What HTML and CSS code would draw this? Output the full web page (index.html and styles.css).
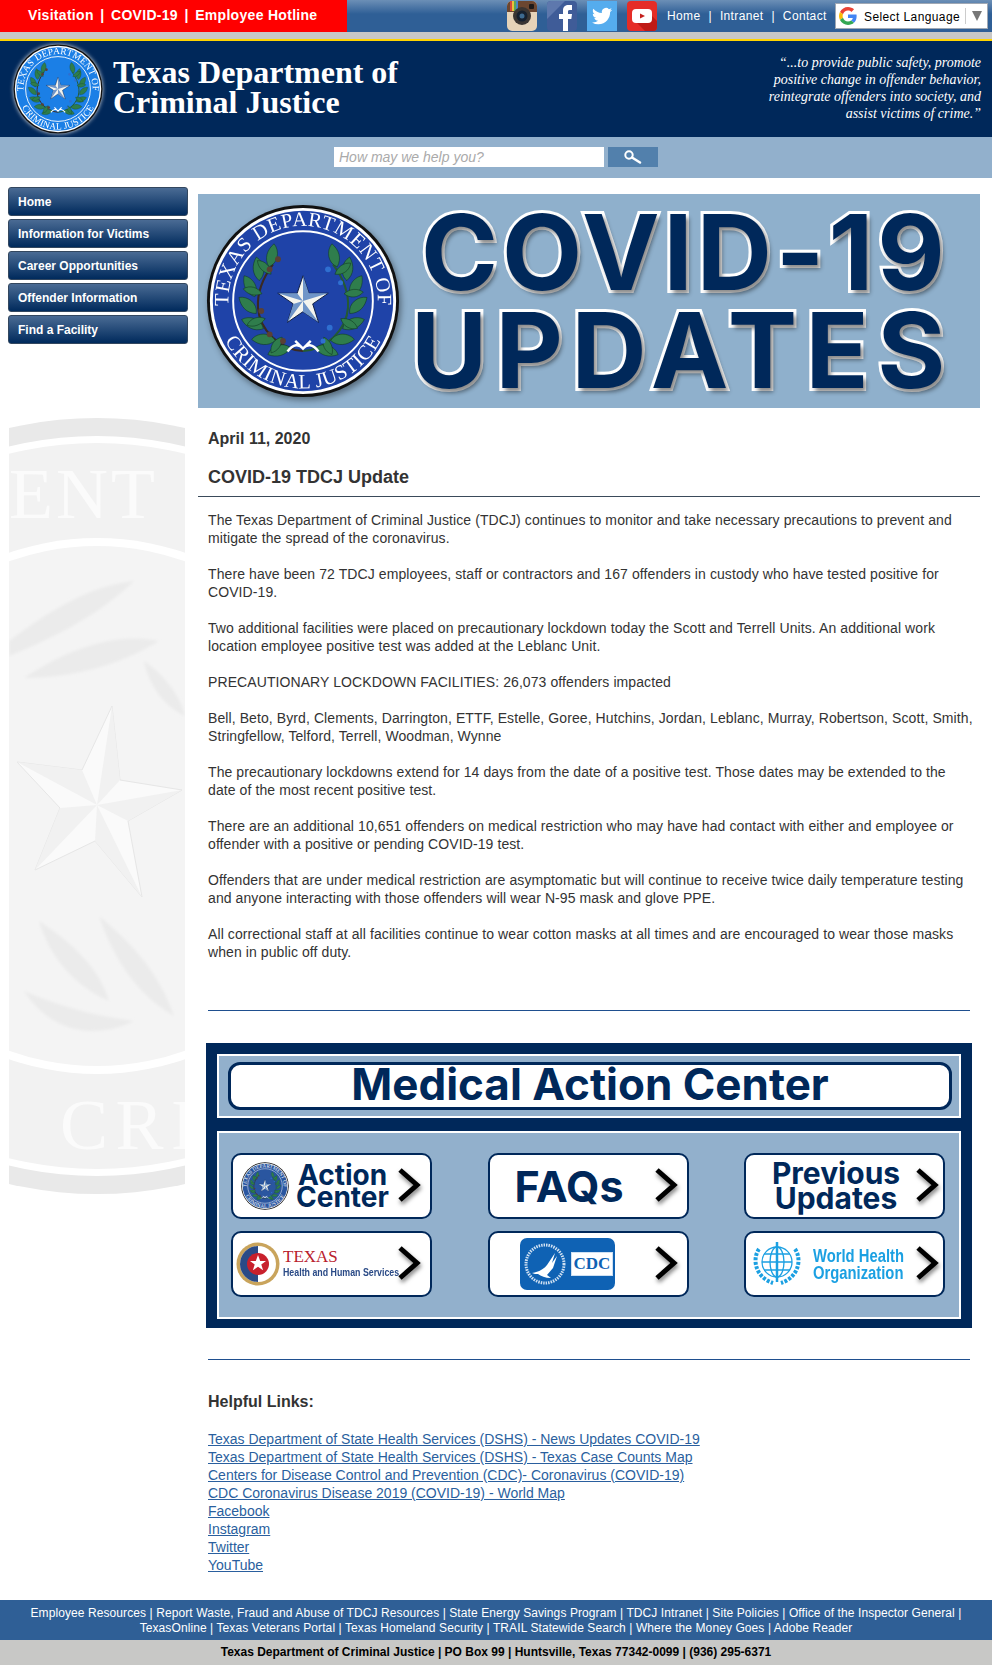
FILE: index.html
```html
<!DOCTYPE html>
<html lang="en">
<head>
    <meta charset="UTF-8">
    <meta name="viewport" content="width=device-width, initial-scale=1.0">
    <title>COVID-19 TDCJ Update</title>
    <link rel="stylesheet" href="styles.css">
</head>
<body>
    <svg class="defs" width="0" height="0" aria-hidden="true">
        <defs>
            <path id="leaf" d="M100 42c3-11 13-16 24-15-1 11-13 20-24 15z"/>
            <path id="leaf-in" d="M100 50c-5-8-4-17 2-23 6 7 5 17-2 23z"/>
            <path id="arc-top" d="M24 112A77 77 0 1 1 176 112"/>
            <path id="arc-bot" d="M10 100A90 90 0 0 0 190 100"/>
            <symbol id="seal" viewBox="0 0 200 200">
                <circle cx="100" cy="100" r="99" fill="#111"/>
                <circle cx="100" cy="100" r="96" fill="#fff"/>
                <circle cx="100" cy="100" r="93" fill="var(--seal)"/>
                <circle cx="100" cy="100" r="72" fill="none" stroke="#fff" stroke-width="2"/>
                <text class="seal-text"><textPath href="#arc-top" startOffset="50%" text-anchor="middle">TEXAS DEPARTMENT OF</textPath></text>
                <text class="seal-text"><textPath href="#arc-bot" startOffset="50%" text-anchor="middle">CRIMINAL JUSTICE</textPath></text>
                <g transform="translate(100 100) scale(.86) translate(-100 -100)">
                    <path d="M100 160C72 158 48 135 46 108 45 90 52 72 64 56" fill="none" stroke="#3a2a22" stroke-width="2.500"/>
                    <path d="M100 160C128 158 152 135 154 108 155 90 148 72 136 56" fill="none" stroke="#245a34" stroke-width="2.500"/>
                    <g fill="#2f7d4c" stroke="#0f3520" stroke-width=".6">
                        <use href="#leaf" transform="rotate(-165 100 100)"/>
                        <use href="#leaf" transform="rotate(-145 100 100)"/>
                        <use href="#leaf" transform="rotate(-125 100 100)"/>
                        <use href="#leaf" transform="rotate(-105 100 100)"/>
                        <use href="#leaf" transform="rotate(-85 100 100)"/>
                        <use href="#leaf" transform="rotate(-65 100 100)"/>
                        <use href="#leaf" transform="rotate(-45 100 100)"/>
                        <use href="#leaf-in" transform="rotate(-150 100 100)"/>
                        <use href="#leaf-in" transform="rotate(-115 100 100)"/>
                        <use href="#leaf-in" transform="rotate(-80 100 100)"/>
                        <use href="#leaf-in" transform="rotate(-50 100 100)"/>
                        <use href="#leaf" transform="rotate(45 100 100) scale(-1 1) translate(-200 0)"/>
                        <use href="#leaf" transform="rotate(65 100 100) scale(-1 1) translate(-200 0)"/>
                        <use href="#leaf" transform="rotate(85 100 100) scale(-1 1) translate(-200 0)"/>
                        <use href="#leaf" transform="rotate(105 100 100) scale(-1 1) translate(-200 0)"/>
                        <use href="#leaf" transform="rotate(125 100 100) scale(-1 1) translate(-200 0)"/>
                        <use href="#leaf" transform="rotate(145 100 100) scale(-1 1) translate(-200 0)"/>
                        <use href="#leaf" transform="rotate(165 100 100) scale(-1 1) translate(-200 0)"/>
                        <use href="#leaf-in" transform="rotate(50 100 100)"/>
                        <use href="#leaf-in" transform="rotate(80 100 100)"/>
                        <use href="#leaf-in" transform="rotate(115 100 100)"/>
                        <use href="#leaf-in" transform="rotate(150 100 100)"/>
                    </g>
                    <g fill="#5a4034">
                        <circle cx="70" cy="50" r="3.500"/><circle cx="60" cy="62" r="3.500"/><circle cx="50" cy="112" r="3.500"/><circle cx="60" cy="140" r="3.500"/><circle cx="76" cy="148" r="3.500"/>
                    </g>
                    <g fill="#2f6fd0">
                        <circle cx="130" cy="62" r="3.500"/><circle cx="145" cy="78" r="3"/><circle cx="132" cy="132" r="3.500"/><circle cx="124" cy="148" r="3"/>
                    </g>
                </g>
                <path d="M100 74 106 92 126 92 110 103 116 122 100 111 84 122 90 103 74 92 94 92Z" fill="#f4f4ee" stroke="#0d1c40"/>
                <path d="M100 74 106 92 126 92 100 100ZM100 100 116 122 100 111ZM100 100 84 122 90 103ZM74 92 94 92 100 100Z" fill="#6f95c8"/>
                <path d="M84 152c6-8 12-8 16-3 4-5 10-5 16 3M100 149l-8-8M100 149l8-8" fill="none" stroke="#fff" stroke-width="2.500"/>
            </symbol>
            <symbol id="chev" viewBox="0 0 26 38">
                <path d="M4 3 21 18 4 33" fill="none" stroke="#000" stroke-width="5"/>
            </symbol>
        </defs>
    </svg>

    <div class="topbar">
        <div class="alert-links">
            <a href="#">Visitation</a><span>|</span><a href="#">COVID-19</a><span>|</span><a href="#">Employee Hotline</a>
        </div>
        <div class="top-right">
            <a href="#" class="social">
                <svg viewBox="0 0 30 30" width="30" height="30">
                    <rect width="30" height="30" rx="5" fill="#e6d3b8"/>
                    <path d="M0 5a5 5 0 0 1 5-5h20a5 5 0 0 1 5 5v6H0z" fill="#6b4630"/>
                    <path d="M3 0h2v10H3z" fill="#d84a3c"/><path d="M5 0h2v10H5z" fill="#e8c23c"/><path d="M7 0h2v10H7z" fill="#5ba55b"/><path d="M9 0h2v10H9z" fill="#4a86c8"/>
                    <circle cx="15" cy="15" r="9" fill="#3a3532"/>
                    <circle cx="15" cy="15" r="5.500" fill="#16202e"/>
                    <circle cx="15" cy="15" r="2.500" fill="#3d6a90"/>
                    <rect x="22" y="3" width="5" height="5" rx="1" fill="#1e1a18"/>
                </svg>
            </a>
            <a href="#" class="social">
                <svg viewBox="0 0 30 30" width="30" height="30">
                    <rect width="30" height="30" rx="4" fill="#3f5c98"/>
                    <path d="M0 4a4 4 0 0 1 4-4h14L0 18z" fill="#5e78ad"/>
                    <path d="M16 30V18h-4v-5h4V9.500C16 5.500 18.500 4 21.500 4H25v5h-2.500C21 9 21 10 21 11v2h4l-.7 5H21v12z" fill="#fff"/>
                </svg>
            </a>
            <a href="#" class="social">
                <svg viewBox="0 0 30 30" width="30" height="30">
                    <rect width="30" height="30" fill="#55acee"/>
                    <path transform="translate(5 5) scale(.84)" fill="#fff" d="M23.953 4.570a10 10 0 01-2.825.775 4.958 4.958 0 002.163-2.723c-.951.555-2.005.959-3.127 1.184a4.920 4.920 0 00-8.384 4.482C7.690 8.095 4.067 6.130 1.640 3.162a4.822 4.822 0 00-.666 2.475c0 1.710.870 3.213 2.188 4.096a4.904 4.904 0 01-2.228-.616v.060a4.923 4.923 0 003.946 4.827 4.996 4.996 0 01-2.212.085 4.936 4.936 0 004.604 3.417 9.867 9.867 0 01-6.102 2.105c-.390 0-.779-.023-1.170-.067a13.995 13.995 0 007.557 2.209c9.053 0 13.998-7.496 13.998-13.985 0-.210 0-.420-.015-.630A9.935 9.935 0 0024 4.590z"/>
                </svg>
            </a>
            <a href="#" class="social">
                <svg viewBox="0 0 30 30" width="30" height="30">
                    <rect width="30" height="30" rx="4" fill="#e52d27"/>
                    <path d="M9 21 19 9l11 11v6a4 4 0 0 1-4 4H18z" fill="#bf1a16"/>
                    <rect x="5" y="8" width="20" height="14" rx="4" fill="#fff"/>
                    <path d="M13 12.500 18 15l-5 2.500z" fill="#c4201c"/>
                </svg>
            </a>
            <div class="top-links">
                <a href="#">Home</a><span>|</span><a href="#">Intranet</a><span>|</span><a href="#">Contact</a>
            </div>
            <div class="translate">
                <svg viewBox="0 0 48 48" width="18" height="18">
                    <path fill="#ea4335" d="M24 9.500c3.500 0 6.700 1.200 9.200 3.600l6.900-6.900C35.900 2.400 30.500 0 24 0 14.600 0 6.500 5.400 2.600 13.200l8 6.200C12.500 13.700 17.800 9.500 24 9.500z"/>
                    <path fill="#4285f4" d="M47 24.500c0-1.600-.1-3.100-.4-4.500H24v9h12.900c-.6 3-2.200 5.500-4.700 7.200l7.700 6C44.400 37.900 47 31.800 47 24.500z"/>
                    <path fill="#fbbc05" d="M10.500 28.600c-.5-1.400-.8-3-.8-4.600s.3-3.200.8-4.600l-8-6.200C.9 16.500 0 20.100 0 24s.9 7.500 2.600 10.800z"/>
                    <path fill="#34a853" d="M24 48c6.500 0 11.900-2.100 15.900-5.800l-7.700-6c-2.200 1.400-4.900 2.300-8.200 2.300-6.200 0-11.500-4.200-13.400-9.900l-8 6.200C6.500 42.600 14.600 48 24 48z"/>
                </svg>
                <span class="translate-label">Select Language</span>
                <span class="translate-sep"></span>
                <span class="translate-arrow"></span>
            </div>
        </div>
    </div>
    <div class="strip"></div>

    <header class="masthead">
        <div class="brand">
            <svg class="brand-seal" width="90" height="90"><use href="#seal"/></svg>
            <div class="brand-name">Texas Department of<br>Criminal Justice</div>
        </div>
        <div class="mission">
            “...to provide public safety, promote<br>
            positive change in offender behavior,<br>
            reintegrate offenders into society, and<br>
            assist victims of crime.”
        </div>
    </header>

    <div class="searchbar">
        <div class="search-input">How may we help you?</div>
        <div class="search-btn">
            <svg viewBox="0 0 20 14" width="20" height="14">
                <circle cx="6" cy="5" r="3.700" fill="none" stroke="#fff" stroke-width="2"/>
                <path d="M9 7.500 17 12.500" stroke="#fff" stroke-width="2.500" stroke-linecap="round"/>
            </svg>
        </div>
    </div>

    <div class="page">
        <aside class="sidebar">
            <nav class="side-nav">
                <a href="#">Home</a>
                <a href="#">Information for Victims</a>
                <a href="#">Career Opportunities</a>
                <a href="#">Offender Information</a>
                <a href="#">Find a Facility</a>
            </nav>
            <svg class="watermark" viewBox="0 0 176 780" width="176" height="780">
                <defs>
                    <filter id="soft"><feGaussianBlur stdDeviation="1.500"/></filter>
                </defs>
                <circle cx="88" cy="390" r="388" fill="#e9e9e9"/>
                <circle cx="88" cy="390" r="370" fill="#fff"/>
                <circle cx="88" cy="390" r="363" fill="#f2f2f2"/>
                <circle cx="88" cy="390" r="268" fill="#fff"/>
                <circle cx="88" cy="390" r="260" fill="#f4f4f4"/>
                <text class="wm-text" x="0" y="102" textLength="146">ENT</text>
                <text class="wm-text" x="51" y="733" textLength="135">CRI</text>
                <g class="wm-leaves" filter="url(#soft)">
                    <path d="M0 225C40 195 80 170 125 165 95 195 50 220 0 240zM15 262C55 235 105 215 150 225 110 250 60 262 15 262zM135 245C150 255 170 275 176 300 155 290 140 270 135 245z"/>
                    <path d="M30 505C60 525 90 550 100 585 65 570 40 540 30 505zM90 500C120 525 150 555 165 600 130 580 105 545 90 500zM15 575C50 590 85 600 125 605 85 625 40 615 15 575z"/>
                </g>
                <path d="M103 290 111 364 173 374 119 405 133 481 86 425 26 454 51 392 8 346 73 354Z" fill="#fafafa" stroke="#e6e6e6"/>
                <path d="M103 290 111 364 88 389ZM8 346 73 354 88 389ZM173 374 119 405 88 389ZM133 481 86 425 88 389ZM26 454 51 392 88 389Z" fill="#f1f1f1"/>
            </svg>
        </aside>

        <main class="content">
            <section class="hero">
                <svg class="hero-seal" width="194" height="194"><use href="#seal"/></svg>
                <div class="hero-title">
                    <div class="hero-line">COVID-19</div>
                    <div class="hero-line hero-line-lower">UPDATES</div>
                </div>
            </section>

            <h3 class="date">April 11, 2020</h3>
            <h2 class="headline">COVID-19 TDCJ Update</h2>

            <div class="article">
                <p>The Texas Department of Criminal Justice (TDCJ) continues to monitor and take necessary precautions to prevent and mitigate the spread of the coronavirus.</p>
                <p>There have been 72 TDCJ employees, staff or contractors and 167 offenders in custody who have tested positive for COVID-19.</p>
                <p>Two additional facilities were placed on precautionary lockdown today the Scott and Terrell Units. An additional work location employee positive test was added at the Leblanc Unit.</p>
                <p>PRECAUTIONARY LOCKDOWN FACILITIES: 26,073 offenders impacted</p>
                <p>Bell, Beto, Byrd, Clements, Darrington, ETTF, Estelle, Goree, Hutchins, Jordan, Leblanc, Murray, Robertson, Scott, Smith, Stringfellow, Telford, Terrell, Woodman, Wynne</p>
                <p>The precautionary lockdowns extend for 14 days from the date of a positive test. Those dates may be extended to the date of the most recent positive test.</p>
                <p>There are an additional 10,651 offenders on medical restriction who may have had contact with either and employee or offender with a positive or pending COVID-19 test.</p>
                <p>Offenders that are under medical restriction are asymptomatic but will continue to receive twice daily temperature testing and anyone interacting with those offenders will wear N-95 mask and glove PPE.</p>
                <p>All correctional staff at all facilities continue to wear cotton masks at all times and are encouraged to wear those masks when in public off duty.</p>
            </div>

            <hr class="rule rule-top">

            <section class="medical">
                <div class="medical-head">
                    <div class="medical-pill">Medical Action Center</div>
                </div>
                <div class="medical-grid">
                    <a href="#" class="med-btn">
                        <svg class="med-seal" width="48" height="48"><use href="#seal"/></svg>
                        <span class="med-label med-label-small">Action<br>Center</span>
                        <svg class="chev" width="26" height="38"><use href="#chev"/></svg>
                    </a>
                    <a href="#" class="med-btn">
                        <span class="med-label med-label-big">FAQs</span>
                        <svg class="chev" width="26" height="38"><use href="#chev"/></svg>
                    </a>
                    <a href="#" class="med-btn">
                        <span class="med-label med-label-wide">Previous<br>Updates</span>
                        <svg class="chev" width="26" height="38"><use href="#chev"/></svg>
                    </a>
                    <a href="#" class="med-btn">
                        <svg class="hhs-seal" width="44" height="44" viewBox="0 0 44 44">
                            <circle cx="22" cy="22" r="21.500" fill="#c9a45c"/>
                            <circle cx="22" cy="22" r="18" fill="#fff"/>
                            <path d="M22 4a18 18 0 0 0-18 18 18 18 0 0 0 18 18z" fill="#2a4a86"/>
                            <circle cx="22" cy="22" r="11" fill="#c8202c"/>
                            <path d="M22 13l2.200 6H30l-4.700 3.500 1.800 5.700-5.100-3.400-5.100 3.400 1.800-5.700L14 19h5.800z" fill="#fff"/>
                        </svg>
                        <span class="hhs">
                            <span class="hhs-top">TEXAS</span>
                            <span class="hhs-sub">Health and Human Services</span>
                        </span>
                        <svg class="chev" width="26" height="38"><use href="#chev"/></svg>
                    </a>
                    <a href="#" class="med-btn">
                        <span class="cdc">
                            <svg viewBox="0 0 44 44" width="44" height="44">
                                <circle cx="22" cy="22" r="19" fill="none" stroke="#cfe0f2" stroke-width="3" stroke-dasharray="1.500 1"/>
                                <path d="M9 31c7-1 12-4 15-8l8-12-3 10 5-7-4 12-6 7 4 3c-6 0-10-2-13-4-2 0-4 0-6-1z" fill="#fff"/>
                            </svg>
                            <span class="cdc-mark">CDC</span>
                        </span>
                        <svg class="chev" width="26" height="38"><use href="#chev"/></svg>
                    </a>
                    <a href="#" class="med-btn">
                        <svg class="who-mark" width="52" height="46" viewBox="0 0 52 46">
                            <g fill="none" stroke="#1ba0e2" stroke-width="1.300">
                                <circle cx="26" cy="21" r="15"/>
                                <ellipse cx="26" cy="21" rx="7" ry="15"/>
                                <path d="M11 21h30M13 13h26M13 29h26"/>
                                <path d="M26 1v40" stroke-width="2.500"/>
                                <path d="M8 8C1 18 4 36 22 42M44 8C51 18 48 36 30 42" stroke-width="4" stroke-dasharray="3 1.500"/>
                            </g>
                        </svg>
                        <span class="who">World Health<br>Organization</span>
                        <svg class="chev" width="26" height="38"><use href="#chev"/></svg>
                    </a>
                </div>
            </section>

            <hr class="rule rule-bottom">

            <h3 class="links-title">Helpful Links:</h3>
            <div class="links">
                <a href="#">Texas Department of State Health Services (DSHS) - News Updates COVID-19</a>
                <a href="#">Texas Department of State Health Services (DSHS) - Texas Case Counts Map</a>
                <a href="#">Centers for Disease Control and Prevention (CDC)- Coronavirus (COVID-19)</a>
                <a href="#">CDC Coronavirus Disease 2019 (COVID-19) - World Map</a>
                <a href="#">Facebook</a>
                <a href="#">Instagram</a>
                <a href="#">Twitter</a>
                <a href="#">YouTube</a>
            </div>
        </main>
    </div>

    <footer>
        <div class="foot-links">
            Employee Resources | Report Waste, Fraud and Abuse of TDCJ Resources | State Energy Savings Program | TDCJ Intranet | Site Policies | Office of the Inspector General |<br>
            TexasOnline | Texas Veterans Portal | Texas Homeland Security | TRAIL Statewide Search | Where the Money Goes | Adobe Reader
        </div>
        <div class="foot-address">Texas Department of Criminal Justice | PO Box 99 | Huntsville, Texas 77342-0099 | (936) 295-6371</div>
    </footer>
</body>
</html>
```

FILE: styles.css
```css
body {
    margin: 0;
    font-family: "Liberation Sans", Arial, sans-serif;
    color: #333;
    background: #fff;
}
a {
    color: inherit;
    text-decoration: none;
}
.defs {
    position: absolute;
}
.seal-text {
    font-family: "Liberation Serif", serif;
    font-size: 21px;
    fill: #fff;
    letter-spacing: .5px;
}

/* top bar */
.topbar {
    display: flex;
    height: 32px;
    background: linear-gradient(#6c8fb6, #2f5f96 14px);
}
.alert-links {
    width: 347px;
    box-sizing: border-box;
    padding-left: 28px;
    background: #f00;
    color: #fff;
    font-size: 14px;
    font-weight: bold;
    line-height: 30px;
    letter-spacing: .3px;
}
.alert-links span {
    margin: 0 6.500px;
}
.top-right {
    flex: 1;
    display: flex;
    align-items: flex-start;
    padding-left: 160px;
    padding-top: 1px;
}
.social {
    display: block;
    width: 30px;
    height: 30px;
    margin-right: 10px;
}
.top-links {
    color: #fff;
    font-size: 12px;
    line-height: 30px;
    letter-spacing: .35px;
    width: 168px;
}
.top-links span {
    margin: 0 8px;
}
.translate {
    display: flex;
    align-items: center;
    box-sizing: border-box;
    width: 153px;
    height: 26px;
    margin-top: 2px;
    padding-left: 3px;
    background: #fff;
    border: 1px solid #a0a8b4;
    color: #000;
    font-size: 12px;
}
.translate-label {
    margin-left: 7px;
    padding-top: 2px;
    letter-spacing: .4px;
}
.translate-sep {
    width: 1px;
    height: 16px;
    margin-left: 5px;
    background: #ccc;
}
.translate-arrow {
    width: 0;
    height: 0;
    margin-left: 6px;
    border-left: 5px solid transparent;
    border-right: 5px solid transparent;
    border-top: 10px solid #777;
}
.strip {
    height: 7px;
    background: #c8c8c6;
    border-bottom: 2px solid #ffd400;
}

/* masthead */
.masthead {
    display: flex;
    justify-content: space-between;
    height: 96px;
    background: #00285a;
    color: #fff;
}
.brand {
    display: flex;
    align-items: center;
    padding-left: 13px;
}
.brand-seal {
    --seal: #1b7fe6;
    filter: drop-shadow(0 0 2px #ddd);
}
.brand-name {
    margin: 0 0 4px 10px;
    font-family: "Liberation Serif", serif;
    font-size: 32px;
    font-weight: bold;
    line-height: 30px;
}
.mission {
    padding: 13px 11px 0 0;
    font-family: "Liberation Serif", serif;
    font-size: 14px;
    font-style: italic;
    line-height: 17px;
    text-align: right;
}

/* search */
.searchbar {
    display: flex;
    height: 41px;
    padding: 10px 0 0 334px;
    box-sizing: border-box;
    background: #92b0cc;
}
.search-input {
    width: 270px;
    height: 20px;
    padding-left: 5px;
    box-sizing: border-box;
    background: #fff;
    color: #aaa;
    font-size: 14px;
    font-style: italic;
    line-height: 20px;
}
.search-btn {
    width: 50px;
    height: 20px;
    margin-left: 4px;
    background: #5280ac;
    text-align: center;
    padding-top: 3px;
    box-sizing: border-box;
}

/* layout */
.page {
    display: flex;
}
.sidebar {
    width: 180px;
    margin-left: 8px;
    flex-shrink: 0;
}
.side-nav {
    display: flex;
    flex-direction: column;
    gap: 3px;
    padding-top: 9px;
}
.side-nav a {
    height: 29px;
    box-sizing: border-box;
    padding-left: 9px;
    background: linear-gradient(#4a6b94, #002a5c);
    border: 1px solid #33475f;
    border-radius: 3px;
    color: #fff;
    font-size: 12px;
    font-weight: bold;
    line-height: 29px;
}
.watermark {
    display: block;
    margin: 72px 0 0 1px;
}
.wm-text {
    font-family: "Liberation Serif", serif;
    font-size: 72px;
    fill: #fbfbfb;
}
.wm-leaves {
    fill: #ebebeb;
}
.content {
    width: 782px;
    margin-left: 10px;
    height: 1422px;
}

/* covid banner */
.hero {
    display: flex;
    align-items: center;
    height: 214px;
    margin-top: 16px;
    background: #8fb0cc;
}
.hero-seal {
    --seal: #1f43a8;
    margin-left: 8px;
    flex-shrink: 0;
    filter: drop-shadow(2px 3px 3px rgba(0, 0, 0, .4));
}
.hero-title {
    margin-left: 21px;
}
.hero-line {
    font-family: Inter, "Open Sans", sans-serif;
    font-size: 104px;
    font-weight: 700;
    line-height: 98px;
    letter-spacing: 4px;
    color: #00285a;
    -webkit-text-stroke: 6px #fff;
    paint-order: stroke fill;
    text-shadow: 3px 4px 4px rgba(0, 0, 0, .45);
    white-space: nowrap;
}
.hero-line-lower {
    margin-left: -10px;
    letter-spacing: 8.500px;
}

/* article */
.date {
    margin: 21px 0 0 10px;
    font-size: 16px;
    line-height: 20px;
}
.headline {
    margin: 17px 0 0 0;
    padding: 0 0 8px 10px;
    border-bottom: 1px solid #3a4a5a;
    font-size: 18px;
    line-height: 22px;
}
.article {
    padding: 14px 6px 0 10px;
    font-size: 14px;
    line-height: 18px;
    letter-spacing: .09px;
}
.article p {
    margin: 0 0 18px;
}
.rule {
    height: 0;
    border: 0;
    border-top: 1px solid #1f4f8f;
    margin: 0 10px;
}
.rule-top {
    margin-top: 49px;
}
.rule-bottom {
    margin-top: 31px;
}

/* medical action center */
.medical {
    box-sizing: border-box;
    width: 766px;
    margin: 32px 0 0 8px;
    padding: 11px 11px 9px;
    background: #00285a;
}
.medical-head {
    padding: 6px 7px 6px 9px;
    background: #92b0cc;
    border: 2px solid #fff;
}
.medical-pill {
    height: 48px;
    box-sizing: border-box;
    background: #fff;
    border: 3px solid #00285a;
    border-radius: 12px;
    color: #00285a;
    font-family: Inter, "Open Sans", sans-serif;
    font-size: 44px;
    font-weight: 700;
    line-height: 38px;
    text-align: center;
}
.medical-grid {
    display: grid;
    grid-template-columns: repeat(3, 201px);
    grid-auto-rows: 66px;
    align-content: start;
    justify-content: space-between;
    gap: 12px 55px;
    height: 188px;
    box-sizing: border-box;
    margin-top: 13px;
    padding: 20px 14px 0 12px;
    background: #92b0cc;
    border: 2px solid #fff;
}
.med-btn {
    display: flex;
    align-items: center;
    justify-content: space-between;
    box-sizing: border-box;
    padding: 0 8px;
    background: #fff;
    border: 2.500px solid #00285a;
    border-radius: 10px;
    color: #00285a;
}
.med-btn:nth-child(3n) {
    padding-right: 3px;
}
.med-seal,
.hhs-seal,
.who-mark {
    flex-shrink: 0;
}
.med-seal {
    --seal: #2a56a0;
}
.hhs-seal {
    margin-left: -5px;
}
.who-mark {
    margin-left: -3px;
}
.chev {
    flex-shrink: 0;
    filter: drop-shadow(1px 3px 2px rgba(0, 0, 0, .5));
}
.med-label {
    font-family: Inter, "Open Sans", sans-serif;
    font-weight: 700;
    text-align: center;
    flex: 1;
}
.med-label-small {
    font-size: 28px;
    line-height: 22px;
}
.med-label-wide {
    font-size: 30px;
    line-height: 25px;
    padding-left: 4px;
}
.med-label-big {
    font-size: 43px;
    padding-right: 12px;
}
.hhs {
    display: flex;
    flex-direction: column;
    flex: 1;
    margin-left: 3px;
}
.hhs-top {
    font-family: "Liberation Serif", serif;
    font-size: 17px;
    line-height: 16px;
    color: #b8202c;
}
.hhs-sub {
    width: 110px;
    font-size: 10.500px;
    font-weight: bold;
    line-height: 14px;
    color: #2a4a86;
    white-space: nowrap;
    transform: scaleX(.84);
    transform-origin: left;
}
.cdc {
    display: flex;
    align-items: center;
    gap: 4px;
    width: 95px;
    height: 52px;
    margin-left: 22px;
    padding-left: 3px;
    box-sizing: border-box;
    background: #0f62b4;
    border-radius: 7px;
}
.cdc-mark {
    padding: 2px 2px;
    border: 1px solid #cfe0f2;
    background: #fff;
    color: #0f62b4;
    font-family: "Liberation Serif", serif;
    font-size: 17px;
    font-weight: bold;
    line-height: 18px;
}
.who {
    width: 95px;
    margin-left: 3px;
    color: #1ba0e2;
    font-size: 18.500px;
    font-weight: bold;
    line-height: 17px;
    white-space: nowrap;
    transform: scaleX(.8);
    transform-origin: left;
}

/* helpful links */
.links-title {
    margin: 32px 0 0 10px;
    font-size: 16px;
    line-height: 20px;
}
.links {
    display: flex;
    flex-direction: column;
    align-items: flex-start;
    margin: 18px 0 0 10px;
    font-size: 14px;
    line-height: 18px;
}
.links a {
    color: #2a5f9e;
    text-decoration: underline;
}

/* footer */
.foot-links {
    padding: 6px 0 4px;
    background: #2f5f96;
    color: #fff;
    font-size: 12px;
    line-height: 15px;
    letter-spacing: .09px;
    text-align: center;
}
.foot-address {
    height: 25px;
    background: #c8c8c6;
    color: #000;
    font-size: 12px;
    font-weight: bold;
    line-height: 25px;
    text-align: center;
}
```
